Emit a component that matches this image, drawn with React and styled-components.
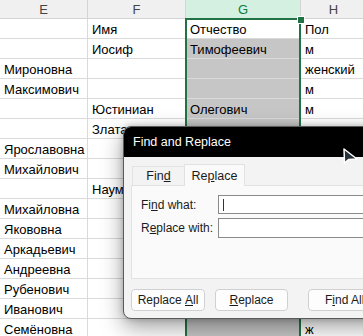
import React from "react";
import styled, { createGlobalStyle } from "styled-components";

const Global = createGlobalStyle`
  html, body { margin: 0; padding: 0; background: #fff; }
  body { width: 363px; height: 336px; overflow: hidden; }
  #root { position: relative; width: 363px; height: 336px; overflow: hidden; }
`;

const Sheet = styled.div`
  display: grid;
  grid-template-columns: 88px 98px 115px 66px;
  font-family: "Liberation Sans", Arial, sans-serif;
  font-size: 13px;
  color: #000;
`;

const HeaderCell = styled.div`
  box-sizing: border-box;
  border-right: 1px solid #d4d4d4;
  border-bottom: 1px solid ${(p) => (p.$selected ? "#7fbf9a" : "#d4d4d4")};
  background: ${(p) => (p.$selected ? "#d3f0e0" : "#f0f0f0")};
  color: ${(p) => (p.$selected ? "#0f7b3e" : "#444")};
  display: flex;
  align-items: center;
  justify-content: center;
  font-size: 13px;
  height: 19px;
`;

const Cell = styled.div`
  height: 20px;
  box-sizing: border-box;
  border-right: 1px solid #dadada;
  border-bottom: 1px solid #dadada;
  background: ${(p) => (p.$shaded ? "#c6c6c6" : "#fff")};
  display: flex;
  align-items: flex-end;
  padding: 0 0 1px 4px;
  white-space: nowrap;
  overflow: visible;
  line-height: 15px;
`;

const Selection = styled.div`
  position: absolute;
  left: 185px;
  top: 18px;
  width: 116px;
  height: 330px;
  box-sizing: border-box;
  border: 2px solid #217346;
  pointer-events: none;
`;

const Handle = styled.div`
  position: absolute;
  left: 297px;
  top: 16px;
  width: 6px;
  height: 6px;
  background: #217346;
  border: 1px solid #fff;
`;

const Dialog = styled.div`
  position: absolute;
  left: 123px;
  top: 126px;
  width: 270px;
  height: 193px;
  box-sizing: border-box;
  border: 1px solid #5a5a5a;
  border-radius: 8px;
  background: #f3f3f3;
  overflow: hidden;
  box-shadow: 0 8px 22px rgba(0, 0, 0, 0.38), 0 0 6px rgba(0, 0, 0, 0.22);
  font-family: "Liberation Sans", Arial, sans-serif;
  font-size: 12px;
  color: #1b1b1b;
  display: flex;
  flex-direction: column;
`;

const TitleBar = styled.div`
  height: 30px;
  background: #000;
  color: #fff;
  display: flex;
  align-items: center;
  padding-left: 9px;
  font-size: 12.5px;
  flex-shrink: 0;
`;

const Body = styled.div`
  padding: 7px 0 0 7px;
  display: flex;
  flex-direction: column;
`;

const Tabs = styled.div`
  display: flex;
  align-items: flex-end;
  height: 21px;
  margin-left: 1px;
`;

const Tab = styled.div`
  box-sizing: border-box;
  height: ${(p) => (p.$active ? "22px" : "19px")};
  width: ${(p) => p.$w}px;
  background: ${(p) => (p.$active ? "#fafafa" : "#f3f3f3")};
  border: 1px solid #e2e2e2;
  border-bottom: none;
  ${(p) => (p.$active ? "" : "border-right: none;")}
  display: flex;
  align-items: center;
  justify-content: center;
  font-size: 12.5px;
  margin-bottom: ${(p) => (p.$active ? "-1px" : "0")};
  position: relative;
  z-index: ${(p) => (p.$active ? 1 : 0)};
`;

const Panel = styled.div`
  box-sizing: border-box;
  height: 94px;
  background: #fafafa;
  border: 1px solid #e2e2e2;
  border-right: none;
  padding: 9px 0 0 9px;
  display: flex;
  flex-direction: column;
  gap: 4px;
`;

const FieldRow = styled.div`
  display: flex;
  align-items: center;
`;

const Label = styled.div`
  width: 77px;
  font-size: 12px;
`;

const Input = styled.div`
  box-sizing: border-box;
  height: ${(p) => p.$h}px;
  flex: 1;
  background: #fff;
  border: 1px solid #8a8a8a;
  border-right: none;
  display: flex;
  align-items: center;
  padding-left: 4px;
`;

const Caret = styled.div`
  width: 1px;
  height: 12px;
  background: #333;
`;

const Buttons = styled.div`
  display: flex;
  padding-top: 10px;
`;

const Button = styled.div`
  box-sizing: border-box;
  width: ${(p) => p.$w}px;
  height: 22px;
  margin-right: ${(p) => p.$gap}px;
  background: #fdfdfd;
  border: 1px solid #d0d0d0;
  border-radius: 4px;
  display: flex;
  align-items: center;
  justify-content: ${(p) => (p.$left ? "flex-start" : "center")};
  padding-left: ${(p) => (p.$left ? "16px" : "0")};
  font-size: 12px;
  flex-shrink: 0;
  white-space: nowrap;
`;

const Cursor = styled.svg`
  position: absolute;
  left: 342px;
  top: 147px;
`;

const rows = [
  ["", "Имя", "Отчество", "Пол"],
  ["", "Иосиф", "Тимофеевич", "м"],
  ["Мироновна", "", "", "женский"],
  ["Максимович", "", "", "м"],
  ["", "Юстиниан", "Олегович", "м"],
  ["", "Злата", "", ""],
  ["Ярославовна", "", "", ""],
  ["Михайлович", "", "", ""],
  ["", "Наум", "", ""],
  ["Михайловна", "", "", ""],
  ["Якововна", "", "", ""],
  ["Аркадьевич", "", "", ""],
  ["Андреевна", "", "", ""],
  ["Рубенович", "", "", ""],
  ["Иванович", "", "", ""],
  ["Семёновна", "", "", "ж"],
];

export default function App() {
  return (
    <>
      <Global />
      <Sheet>
        <HeaderCell>E</HeaderCell>
        <HeaderCell>F</HeaderCell>
        <HeaderCell $selected>G</HeaderCell>
        <HeaderCell>H</HeaderCell>
        {rows.map((r, i) =>
          r.map((v, j) => (
            <Cell key={`${i}-${j}`} $shaded={j === 2 && i > 0}>
              {v}
            </Cell>
          ))
        )}
      </Sheet>
      <Selection />
      <Handle />
      <Dialog>
        <TitleBar>Find and Replace</TitleBar>
        <Body>
          <Tabs>
            <Tab $w={52}>
              Fin<u>d</u>
            </Tab>
            <Tab $active $w={61}>
              Re<u>p</u>lace
            </Tab>
          </Tabs>
          <Panel>
            <FieldRow>
              <Label>
                Fi<u>n</u>d what:
              </Label>
              <Input $h={19}>
                <Caret />
              </Input>
            </FieldRow>
            <FieldRow>
              <Label>
                R<u>e</u>place with:
              </Label>
              <Input $h={20} />
            </FieldRow>
          </Panel>
          <Buttons>
            <Button $w={74} $gap={10}>
              Replace&nbsp;<u>A</u>ll
            </Button>
            <Button $w={73} $gap={20}>
              <u>R</u>eplace
            </Button>
            <Button $w={74} $gap={0} $left>
              F<u>i</u>nd All
            </Button>
          </Buttons>
        </Body>
      </Dialog>
      <Cursor width="18" height="20" viewBox="0 0 18 20">
        <path d="M2 2 L2.5 16 L6.5 12.5 L15 12 Z" fill="#26313a" stroke="#fff" strokeWidth="1.5" strokeLinejoin="round" />
      </Cursor>
    </>
  );
}
